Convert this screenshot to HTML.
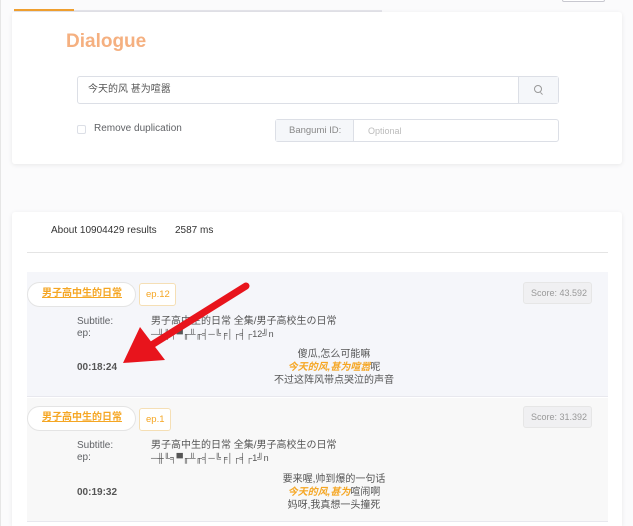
<!DOCTYPE html>
<html style="overflow:hidden"><head><meta charset="utf-8"><style>
*{box-sizing:border-box;margin:0;padding:0}
html,body{width:633px;height:526px;overflow:hidden}
body{background:#fbfbfc;font-family:"Liberation Sans","Noto Sans CJK SC",sans-serif;font-size:10px;color:#555;position:relative}
.abs{position:absolute}
.card{position:absolute;background:#fff;border-radius:3px;box-shadow:0 1px 5px rgba(0,0,0,.08)}
.t{position:absolute;white-space:nowrap;line-height:12px}
</style></head><body>
<div class="abs" style="left:0;top:0;width:1px;height:526px;background:#e6e6e6"></div>
<div class="abs" style="left:562px;top:-3px;width:43px;height:5px;border:1px solid #c8c8d0;border-radius:2px;background:#fff"></div>
<div class="abs" style="left:14px;top:10px;width:368px;height:2px;background:#e4e4ea"></div>
<div class="abs" style="left:14px;top:9px;width:60px;height:2px;background:#f0a030"></div>
<div class="card" style="left:12px;top:12px;width:610px;height:152px">
  <div class="t" style="left:54px;top:19px;font-size:19px;line-height:22px;font-weight:bold;color:#f5b080">Dialogue</div>
  <div class="abs" style="left:65px;top:64px;width:482px;height:28px;border:1px solid #dcdfe6;border-radius:3px;background:#fff"></div>
  <div class="abs" style="left:506px;top:65px;width:40px;height:26px;background:#f5f7fa;border-left:1px solid #dcdfe6"></div>
  <div class="abs" style="left:522px;top:73px;width:8px;height:8px;border:1px solid #999;border-radius:50%"></div>
  <div class="abs" style="left:528px;top:81px;width:3px;height:1px;background:#999;transform:rotate(45deg)"></div>
  <div class="t" style="left:76px;top:72px;font-size:10px;color:#555">今天的风 甚为喧嚣</div>
  <div class="abs" style="left:65px;top:113px;width:9px;height:9px;border:1px solid #dcdfe6;border-radius:2px"></div>
  <div class="t" style="left:82px;top:111px;color:#606266">Remove duplication</div>
  <div class="abs" style="left:263px;top:107px;width:284px;height:23px;border:1px solid #dcdfe6;border-radius:3px"></div>
  <div class="abs" style="left:264px;top:108px;width:78px;height:21px;background:#f5f7fa;border-right:1px solid #dcdfe6"></div>
  <div class="t" style="left:277px;top:113px;color:#888;font-size:9.5px">Bangumi ID:</div>
  <div class="t" style="left:356px;top:113px;color:#bbb;font-size:9px">Optional</div>
</div>
<div class="card" style="left:12px;top:212px;width:610px;height:314px;border-radius:3px 3px 0 0">
  <div class="t" style="left:39px;top:13px;color:#333">About 10904429 results</div>
  <div class="t" style="left:163px;top:13px;color:#333">2587 ms</div>
  <div class="abs" style="left:15px;top:40px;width:581px;height:1px;background:#e4e4e4"></div>
  <div class="abs" style="left:15px;top:60px;width:581px;height:125px;background:#f5f6fa;border-bottom:1px solid #e8e8ee"></div>
  <div class="abs" style="left:15px;top:186px;width:581px;height:124px;background:#f8f8f8;border-bottom:1px solid #e8e8ee"></div>
</div>
<!-- item 1 -->
<div class="abs" style="left:27px;top:282px;width:109px;height:25px;border:1px solid #e4e4e4;border-radius:13px;background:#fff"></div>
<div class="t" style="left:42px;top:288px;color:#f5a623;text-decoration:underline;font-weight:bold">男子高中生的日常</div>
<div class="abs" style="left:139px;top:283px;width:37px;height:23px;border:1px solid #f5dfb5;border-radius:3px;background:#fff"></div>
<div class="t" style="left:146px;top:289px;color:#f5a623;font-size:9.5px">ep.12</div>
<div class="abs" style="left:523px;top:282px;width:69px;height:22px;border:1px solid #e6e6e6;border-radius:3px;background:#f0f0f2"></div>
<div class="t" style="left:531px;top:287px;color:#999;font-size:9px">Score: 43.592</div>
<div class="t" style="left:77px;top:316px;color:#606266">Subtitle:</div>
<div class="t" style="left:77px;top:328px;color:#606266">ep:</div>
<div class="t" style="left:151px;top:316px;color:#555">男子高中生的日常 全集/男子高校生の日常</div>
<div class="t" style="left:151px;top:328px;color:#555;font-size:9px">─╨╢╕▀╓╨╓╡─╚╒│┌╡┌12╝n</div>
<div class="t" style="left:77px;top:362px;color:#555;font-weight:bold">00:18:24</div>
<div class="t" style="left:234px;width:200px;top:349px;text-align:center;color:#555">傻瓜,怎么可能嘛</div>
<div class="t" style="left:234px;width:200px;top:362px;text-align:center;color:#555"><b style="color:#f5a623;font-style:italic">今天的风,甚为喧嚣</b>呢</div>
<div class="t" style="left:234px;width:200px;top:375px;text-align:center;color:#555">不过这阵风带点哭泣的声音</div>
<!-- item 2 -->
<div class="abs" style="left:27px;top:406px;width:109px;height:25px;border:1px solid #e4e4e4;border-radius:13px;background:#fff"></div>
<div class="t" style="left:42px;top:412px;color:#f5a623;text-decoration:underline;font-weight:bold">男子高中生的日常</div>
<div class="abs" style="left:139px;top:408px;width:32px;height:23px;border:1px solid #f5dfb5;border-radius:3px;background:#fff"></div>
<div class="t" style="left:146px;top:414px;color:#f5a623;font-size:9.5px">ep.1</div>
<div class="abs" style="left:523px;top:406px;width:69px;height:22px;border:1px solid #e6e6e6;border-radius:3px;background:#f0f0f2"></div>
<div class="t" style="left:531px;top:411px;color:#999;font-size:9px">Score: 31.392</div>
<div class="t" style="left:77px;top:440px;color:#606266">Subtitle:</div>
<div class="t" style="left:77px;top:452px;color:#606266">ep:</div>
<div class="t" style="left:151px;top:440px;color:#555">男子高中生的日常 全集/男子高校生の日常</div>
<div class="t" style="left:151px;top:452px;color:#555;font-size:9px">─╫╙╕▀╓╨╓╡─╚╒│┌╡┌1╝n</div>
<div class="t" style="left:77px;top:487px;color:#555;font-weight:bold">00:19:32</div>
<div class="t" style="left:234px;width:200px;top:474px;text-align:center;color:#555">要来喔,帅到爆的一句话</div>
<div class="t" style="left:234px;width:200px;top:487px;text-align:center;color:#555"><b style="color:#f5a623;font-style:italic">今天的风,甚为</b>喧闹啊</div>
<div class="t" style="left:234px;width:200px;top:500px;text-align:center;color:#555">妈呀,我真想一头撞死</div>
<svg class="abs" style="left:0;top:0" width="633" height="526">
<line x1="246" y1="286" x2="150" y2="346" stroke="#e8141c" stroke-width="7" stroke-linecap="round"/>
<polygon points="123,363 140,327 165,360" fill="#e8141c"/>
</svg>
</body></html>
